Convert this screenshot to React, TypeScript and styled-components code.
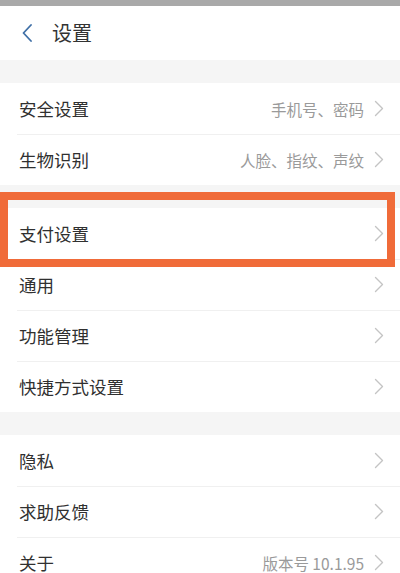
import React from 'react'
import styled, { createGlobalStyle } from 'styled-components'

const GlobalStyle = createGlobalStyle`
  html, body {
    margin: 0;
    padding: 0;
    background: #ffffff;
  }
  body {
    font-family: "Noto Sans CJK SC", "Noto Sans", sans-serif;
  }
`

const Screen = styled.div`
  width: 400px;
  height: 573px;
  overflow: hidden;
  background: #ffffff;
  display: flex;
  flex-direction: column;
`

const StatusStrip = styled.div`
  height: 6px;
  background: #a9a9a9;
  flex-shrink: 0;
`

const Header = styled.div`
  height: 54px;
  display: flex;
  align-items: center;
  padding-left: 21px;
  gap: 19px;
  flex-shrink: 0;
`

const Title = styled.h1`
  margin: 0;
  font-size: 20px;
  font-weight: 400;
  color: #333333;
  line-height: 1;
`

const Band = styled.div`
  height: 23px;
  background: #f5f5f5;
  flex-shrink: 0;
`

const Group = styled.div`
  display: flex;
  flex-direction: column;
`

const Row = styled.div<{ $first?: boolean }>`
  position: relative;
  height: 51px;
  display: flex;
  align-items: center;
  padding: 0 16px 0 19px;
  flex-shrink: 0;

  &::before {
    content: '';
    display: ${(p) => (p.$first ? 'none' : 'block')};
    position: absolute;
    top: 0;
    left: 17px;
    right: 0;
    height: 1px;
    background: #f0f0f0;
  }
`

const Label = styled.span`
  flex: 1;
  font-size: 17.5px;
  color: #303030;
`

const Value = styled.span`
  font-size: 15.5px;
  color: #9a9a9a;
  margin-right: 10px;
`

const Highlight = styled.div`
  position: absolute;
  left: 0;
  width: 395px;
  top: -16px;
  height: 75px;
  border: 8px solid #f06b39;
  box-sizing: border-box;
  pointer-events: none;
  z-index: 2;
`

const BackIcon = () => (
  <svg width="12" height="18" viewBox="0 0 12 18">
    <path d="M10 1 L2.5 9 L10 17" fill="none" stroke="#3f6fa6" strokeWidth="1.8" strokeLinecap="round" strokeLinejoin="round" />
  </svg>
)

const Chevron = () => (
  <svg width="10" height="17" viewBox="0 0 10 17">
    <path d="M1.5 1.5 L8.5 8.5 L1.5 15.5" fill="none" stroke="#c4c4c4" strokeWidth="1.4" strokeLinecap="round" strokeLinejoin="round" />
  </svg>
)

type Item = { label: string; value?: string; highlight?: boolean }

const groups: Item[][] = [
  [
    { label: '安全设置', value: '手机号、密码' },
    { label: '生物识别', value: '人脸、指纹、声纹' },
  ],
  [
    { label: '支付设置', highlight: true },
    { label: '通用' },
    { label: '功能管理' },
    { label: '快捷方式设置' },
  ],
  [
    { label: '隐私' },
    { label: '求助反馈' },
    { label: '关于', value: '版本号 10.1.95' },
  ],
]

const App: React.FC = () => {
  return (
    <Screen>
      <GlobalStyle />
      <StatusStrip />
      <Header>
        <BackIcon />
        <Title>设置</Title>
      </Header>
      {groups.map((items, gi) => (
        <React.Fragment key={gi}>
          <Band />
          <Group>
            {items.map((item, i) => (
              <Row key={item.label} $first={i === 0}>
                <Label>{item.label}</Label>
                {item.value && <Value>{item.value}</Value>}
                <Chevron />
                {item.highlight && <Highlight />}
              </Row>
            ))}
          </Group>
        </React.Fragment>
      ))}
    </Screen>
  )
}

export default App
